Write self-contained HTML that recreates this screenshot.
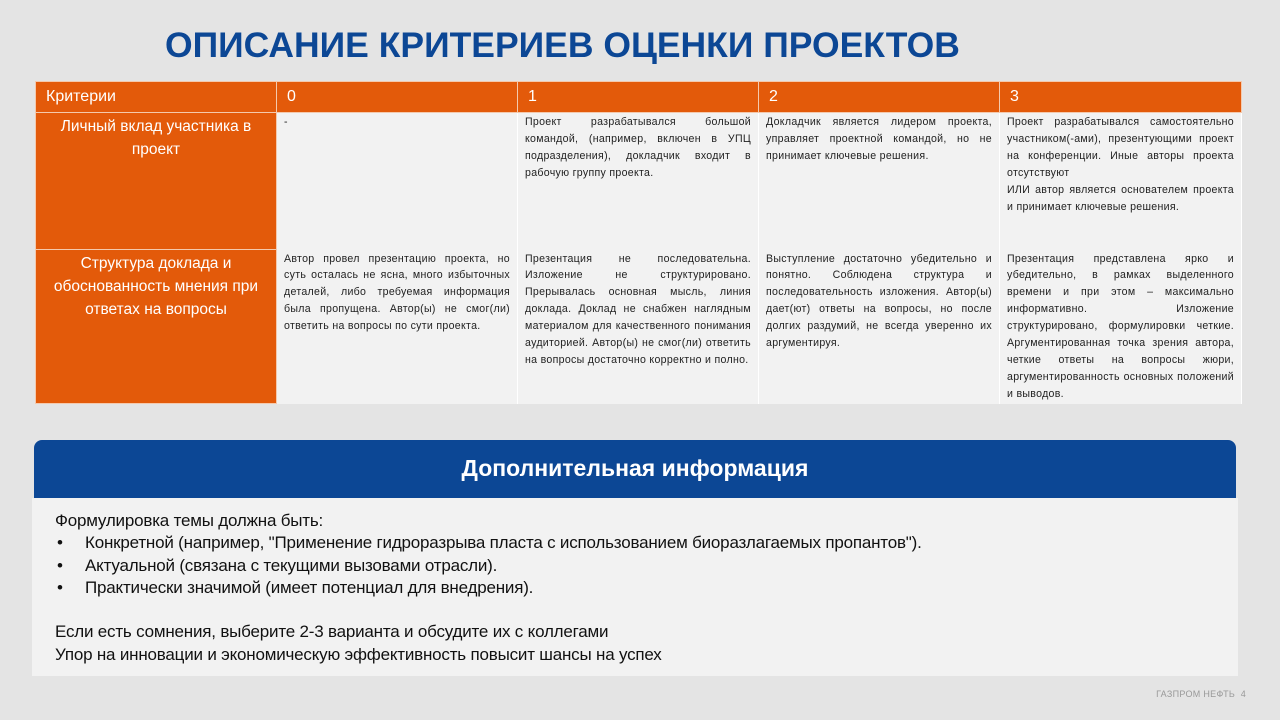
<!DOCTYPE html>
<html><head><meta charset="utf-8"><style>
*{margin:0;padding:0;box-sizing:border-box}
body{width:1280px;height:720px;background:#e4e4e4;font-family:"Liberation Sans","Noto Sans CJK SC",sans-serif;position:relative;overflow:hidden}
h1{position:absolute;left:165px;top:25px;font-size:35.5px;color:#0c4795;font-weight:bold;white-space:nowrap}
table{position:absolute;left:35px;top:81px;width:1206px;border-collapse:collapse;table-layout:fixed}
td{vertical-align:top;border:1px solid #f5d0b8}
.h td{background:#e35a0a;color:#fff;font-size:16px;height:31px;padding:6px 10px;border-color:#f4c9ad}
.c{background:#e35a0a;color:#fff;font-size:15.5px;text-align:center;line-height:23px;padding:2px 8px;border-color:#f4c9ad}
.t{background:#f2f2f2;font-size:10.6px;letter-spacing:0.3px;line-height:16.9px;text-align:justify;padding:1px 7px;color:#222;border:none;border-right:1px solid #fff}
.bar{position:absolute;left:34px;top:440px;width:1202px;height:59px;background:#0c4795;border-radius:8px 8px 0 0;color:#fff;font-weight:bold;font-size:23px;text-align:center;line-height:56px}
.panel{position:absolute;left:32px;top:498px;width:1206px;height:178px;background:#f2f2f2;padding:12px 0 0 23px;font-size:17px;line-height:22.3px;color:#111;letter-spacing:-0.2px}
.b{padding-left:30px;position:relative}
.b:before{content:"•";position:absolute;left:2px}
.foot{position:absolute;right:34px;top:689px;font-size:9px;color:#999;letter-spacing:0.3px}
</style></head><body>
<h1>ОПИСАНИЕ КРИТЕРИЕВ ОЦЕНКИ ПРОЕКТОВ</h1>
<table>
<colgroup><col style="width:241px"><col style="width:241px"><col style="width:241px"><col style="width:241px"><col style="width:242px"></colgroup>
<tr class="h"><td>Критерии</td><td>0</td><td>1</td><td>2</td><td>3</td></tr>
<tr style="height:137px"><td class="c">Личный вклад участника в проект</td>
<td class="t">-</td>
<td class="t">Проект разрабатывался большой командой, (например, включен в УПЦ подразделения), докладчик входит в рабочую группу проекта.</td>
<td class="t">Докладчик является лидером проекта, управляет проектной командой, но не принимает ключевые решения.</td>
<td class="t" style="padding-bottom:0">Проект разрабатывался самостоятельно участником(-ами), презентующими проект на конференции. Иные авторы проекта отсутствуют<br>ИЛИ автор является основателем проекта и принимает ключевые решения.</td></tr>
<tr style="height:153px"><td class="c">Структура доклада и обоснованность мнения при ответах на вопросы</td>
<td class="t">Автор провел презентацию проекта, но суть осталась не ясна, много избыточных деталей, либо требуемая информация была пропущена. Автор(ы) не смог(ли) ответить на вопросы по сути проекта.</td>
<td class="t">Презентация не последовательна. Изложение не структурировано. Прерывалась основная мысль, линия доклада. Доклад не снабжен наглядным материалом для качественного понимания аудиторией. Автор(ы) не смог(ли) ответить на вопросы достаточно корректно и полно.</td>
<td class="t">Выступление достаточно убедительно и понятно. Соблюдена структура и последовательность изложения. Автор(ы) дает(ют) ответы на вопросы, но после долгих раздумий, не всегда уверенно их аргументируя.</td>
<td class="t">Презентация представлена ярко и убедительно, в рамках выделенного времени и при этом – максимально информативно. Изложение структурировано, формулировки четкие. Аргументированная точка зрения автора, четкие ответы на вопросы жюри, аргументированность основных положений и выводов.</td></tr>
</table>
<div class="bar">Дополнительная информация</div>
<div class="panel">
<div>Формулировка темы должна быть:</div>
<div class="b">Конкретной (например, "Применение гидроразрыва пласта с использованием биоразлагаемых пропантов").</div>
<div class="b">Актуальной (связана с текущими вызовами отрасли).</div>
<div class="b">Практически значимой (имеет потенциал для внедрения).</div>
<div>&nbsp;</div>
<div>Если есть сомнения, выберите 2-3 варианта и обсудите их с коллегами</div>
<div>Упор на инновации и экономическую эффективность повысит шансы на успех</div>
</div>
<div class="foot">ГАЗПРОМ НЕФТЬ &nbsp;4</div>
</body></html>
